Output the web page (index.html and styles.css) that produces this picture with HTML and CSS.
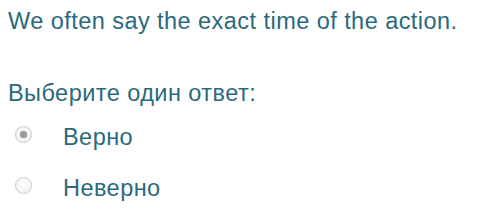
FILE: index.html
```html
<!DOCTYPE html>
<html>
<head>
<meta charset="utf-8">
<link rel="stylesheet" href="styles.css">
</head>
<body>
<div class="question">
  <p class="qtext">We often say the exact time of the action.</p>
  <p class="prompt">Выберите один ответ:</p>
  <div class="answers">
    <label class="option"><span class="radio checked"></span><span class="label">Верно</span></label>
    <label class="option"><span class="radio"></span><span class="label">Неверно</span></label>
  </div>
</div>
</body>
</html>
```
FILE: styles.css
```css
html, body {
  margin: 0;
  background: #ffffff;
}
body {
  font-family: "Liberation Sans", Arial, sans-serif;
  font-size: 23.5px;
  letter-spacing: 0.45px;
  color: #2b697d;
}
.question {
  padding: 8px 8px 0 8px;
}
.qtext {
  margin: 0;
  line-height: 26px;
}
.prompt {
  margin: 46px 0 0 0;
  line-height: 26px;
}
.answers {
  display: flex;
  flex-direction: column;
  gap: 25px;
  margin-top: 18px;
}
.option {
  display: flex;
  align-items: flex-start;
  line-height: 26px;
}
.radio {
  box-sizing: border-box;
  flex: none;
  width: 17px;
  height: 17px;
  margin-top: 2px;
  margin-left: 7px;
  margin-right: 31px;
  border-radius: 50%;
  border: 1px solid #cbcbcb;
  background: radial-gradient(circle at 50% 40%, #fdfdfd 0%, #eeeeee 100%);
  box-shadow: 0 0 1px rgba(0, 0, 0, 0.08);
  position: relative;
}
.radio.checked::after {
  content: "";
  position: absolute;
  left: 4px;
  top: 4px;
  width: 7px;
  height: 7px;
  border-radius: 50%;
  background: #9b9b9b;
  box-shadow: 0 0 1px #9b9b9b;
}
```
